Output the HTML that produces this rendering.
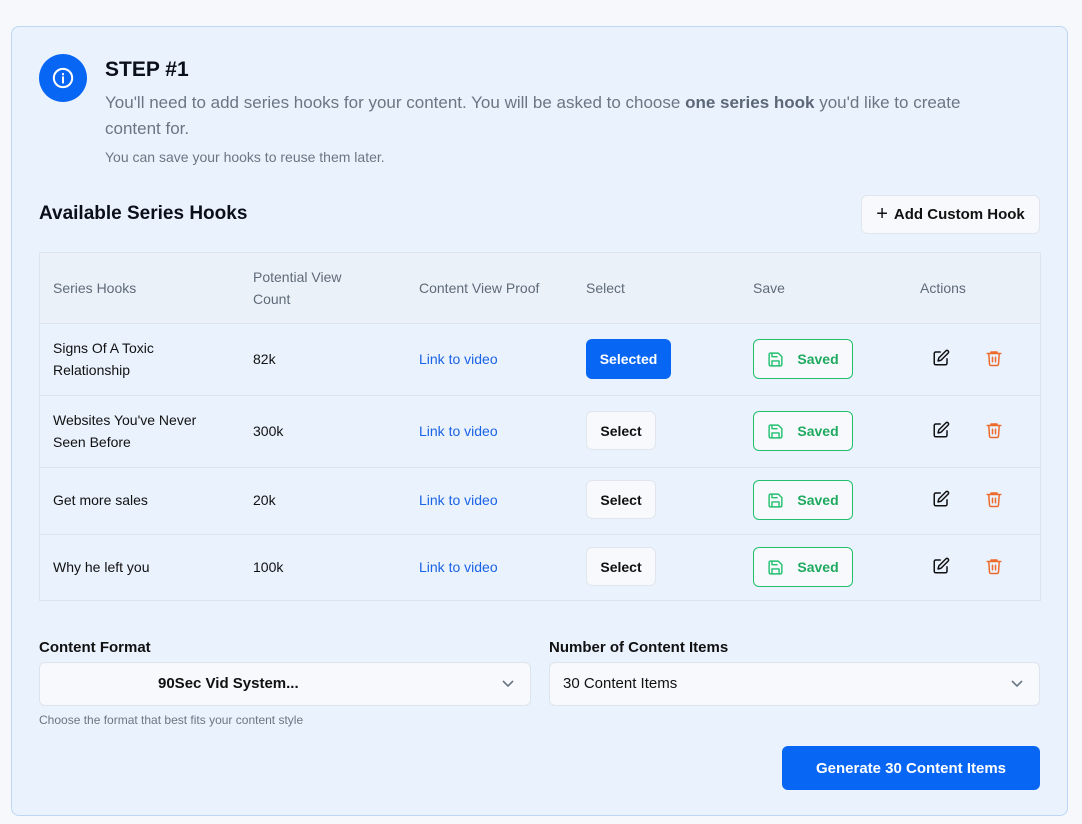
<!DOCTYPE html>
<html><head><meta charset="utf-8"><style>
*{box-sizing:border-box;margin:0;padding:0}
body{width:1082px;height:824px;background:#f6f8fb;font-family:"Liberation Sans",sans-serif;position:relative;overflow:hidden;color:#111}
.card{position:absolute;left:11px;top:26px;width:1057px;height:790px;background:#eaf2fd;border:1px solid #bcd6f3;border-radius:8px}
.a{position:absolute}
.th{position:absolute;font-size:14px;color:#5f6b7a;line-height:22px}
.td{position:absolute;font-size:14px;color:#111;line-height:22px}
.lk{color:#1a63e6}
.btn{position:absolute;border-radius:6px;font-size:14px;font-weight:bold;display:flex;align-items:center;justify-content:center}
.sel{background:#f7f9fc;border:1px solid #e1e6ee;color:#111;width:70px;height:39px}
.saved{width:100px;height:40px;border:1px solid #22c06e;background:#f7f9fc;color:#1faa5f;gap:13px}
.row{position:absolute;left:40px;width:1000px;border-top:1px solid #dde4ee}
</style></head><body>
<div class="card"></div>
<div class="a" style="left:39px;top:54px;width:48px;height:48px;border-radius:50%;background:#0866f5;display:flex;align-items:center;justify-content:center">
<svg width="22" height="22" viewBox="0 0 24 24" fill="none" stroke="#fff" stroke-width="2.2" stroke-linecap="round"><circle cx="12" cy="12" r="10"/><path d="M12 11v6M12 7.5v.5"/></svg></div>
<div class="a" style="left:105px;top:58px;font-size:21px;font-weight:bold;color:#0b0f1a">STEP #1</div>
<div class="a" style="left:105px;top:90px;width:900px;font-size:17px;line-height:26px;color:#6b7684">You'll need to add series hooks for your content. You will be asked to choose <b style="color:#5c6878">one series hook</b> you'd like to create<br>content for.</div>
<div class="a" style="left:105px;top:149px;font-size:14px;color:#6b7684">You can save your hooks to reuse them later.</div>
<div class="a" style="left:39px;top:203px;font-size:19px;font-weight:bold;color:#0b0f1a">Available Series Hooks</div>
<div class="btn" style="left:861px;top:195px;width:179px;height:39px;background:#f7f9fc;border:1px solid #e1e6ee;color:#111;font-size:15px"><span style="font-size:20px;font-weight:normal;margin-right:6px">+</span>Add Custom Hook</div>
<div class="a" style="left:39px;top:252px;width:1002px;height:349px;border:1px solid #dde4ee;background:#eaf2fd"></div>
<div class="a" style="left:40px;top:253px;width:1000px;height:70px;background:#ebf1f8"></div>
<div class="th" style="left:53px;top:277px">Series Hooks</div>
<div class="th" style="left:253px;top:266px">Potential View<br>Count</div>
<div class="th" style="left:419px;top:277px">Content View Proof</div>
<div class="th" style="left:586px;top:277px">Select</div>
<div class="th" style="left:753px;top:277px">Save</div>
<div class="th" style="left:920px;top:277px">Actions</div>
<div class="row" style="top:323px"></div><div class="row" style="top:395px"></div><div class="row" style="top:467px"></div><div class="row" style="top:534px"></div>

<div class="td" style="left:53px;top:337px">Signs Of A Toxic<br>Relationship</div>
<div class="td" style="left:253px;top:348px">82k</div>
<div class="td lk" style="left:419px;top:348px">Link to video</div>
<div class="btn" style="left:586px;top:339px;width:85px;height:40px;background:#0866f5;color:#fff">Selected</div>

<div class="td" style="left:53px;top:409px">Websites You've Never<br>Seen Before</div>
<div class="td" style="left:253px;top:420px">300k</div>
<div class="td lk" style="left:419px;top:420px">Link to video</div>
<div class="btn sel" style="left:586px;top:411px">Select</div>

<div class="td" style="left:53px;top:489px">Get more sales</div>
<div class="td" style="left:253px;top:489px">20k</div>
<div class="td lk" style="left:419px;top:489px">Link to video</div>
<div class="btn sel" style="left:586px;top:480px">Select</div>

<div class="td" style="left:53px;top:556px">Why he left you</div>
<div class="td" style="left:253px;top:556px">100k</div>
<div class="td lk" style="left:419px;top:556px">Link to video</div>
<div class="btn sel" style="left:586px;top:547px">Select</div>

<div class="btn saved" style="left:753px;top:339px"><svg width="17" height="17" viewBox="0 0 24 24" fill="none" stroke="#22c06e" stroke-width="2" stroke-linejoin="round"><path d="M5 3h11l5 5v11a2 2 0 0 1-2 2H5a2 2 0 0 1-2-2V5a2 2 0 0 1 2-2z"/><path d="M7 3v5h8M7 21v-7h10v7"/></svg>Saved</div>
<div class="btn saved" style="left:753px;top:411px"><svg width="17" height="17" viewBox="0 0 24 24" fill="none" stroke="#22c06e" stroke-width="2" stroke-linejoin="round"><path d="M5 3h11l5 5v11a2 2 0 0 1-2 2H5a2 2 0 0 1-2-2V5a2 2 0 0 1 2-2z"/><path d="M7 3v5h8M7 21v-7h10v7"/></svg>Saved</div>
<div class="btn saved" style="left:753px;top:480px"><svg width="17" height="17" viewBox="0 0 24 24" fill="none" stroke="#22c06e" stroke-width="2" stroke-linejoin="round"><path d="M5 3h11l5 5v11a2 2 0 0 1-2 2H5a2 2 0 0 1-2-2V5a2 2 0 0 1 2-2z"/><path d="M7 3v5h8M7 21v-7h10v7"/></svg>Saved</div>
<div class="btn saved" style="left:753px;top:547px"><svg width="17" height="17" viewBox="0 0 24 24" fill="none" stroke="#22c06e" stroke-width="2" stroke-linejoin="round"><path d="M5 3h11l5 5v11a2 2 0 0 1-2 2H5a2 2 0 0 1-2-2V5a2 2 0 0 1 2-2z"/><path d="M7 3v5h8M7 21v-7h10v7"/></svg>Saved</div>

<svg class="a" style="left:932px;top:349px" width="18" height="18" viewBox="0 0 24 24" fill="none" stroke="#111" stroke-width="2" stroke-linecap="round" stroke-linejoin="round"><path d="M11 4H5a2 2 0 0 0-2 2v13a2 2 0 0 0 2 2h13a2 2 0 0 0 2-2v-6"/><path d="M18.5 2.5a2.1 2.1 0 0 1 3 3L12 15l-4 1 1-4z"/></svg>
<svg class="a" style="left:985px;top:349px" width="18" height="18" viewBox="0 0 24 24" fill="none" stroke="#ec6a2c" stroke-width="2" stroke-linecap="round" stroke-linejoin="round"><path d="M3 6h18M8 6V4h8v2M19 6l-1 14a2 2 0 0 1-2 2H8a2 2 0 0 1-2-2L5 6M10 11v6M14 11v6"/></svg>
<svg class="a" style="left:932px;top:421px" width="18" height="18" viewBox="0 0 24 24" fill="none" stroke="#111" stroke-width="2" stroke-linecap="round" stroke-linejoin="round"><path d="M11 4H5a2 2 0 0 0-2 2v13a2 2 0 0 0 2 2h13a2 2 0 0 0 2-2v-6"/><path d="M18.5 2.5a2.1 2.1 0 0 1 3 3L12 15l-4 1 1-4z"/></svg>
<svg class="a" style="left:985px;top:421px" width="18" height="18" viewBox="0 0 24 24" fill="none" stroke="#ec6a2c" stroke-width="2" stroke-linecap="round" stroke-linejoin="round"><path d="M3 6h18M8 6V4h8v2M19 6l-1 14a2 2 0 0 1-2 2H8a2 2 0 0 1-2-2L5 6M10 11v6M14 11v6"/></svg>
<svg class="a" style="left:932px;top:490px" width="18" height="18" viewBox="0 0 24 24" fill="none" stroke="#111" stroke-width="2" stroke-linecap="round" stroke-linejoin="round"><path d="M11 4H5a2 2 0 0 0-2 2v13a2 2 0 0 0 2 2h13a2 2 0 0 0 2-2v-6"/><path d="M18.5 2.5a2.1 2.1 0 0 1 3 3L12 15l-4 1 1-4z"/></svg>
<svg class="a" style="left:985px;top:490px" width="18" height="18" viewBox="0 0 24 24" fill="none" stroke="#ec6a2c" stroke-width="2" stroke-linecap="round" stroke-linejoin="round"><path d="M3 6h18M8 6V4h8v2M19 6l-1 14a2 2 0 0 1-2 2H8a2 2 0 0 1-2-2L5 6M10 11v6M14 11v6"/></svg>
<svg class="a" style="left:932px;top:557px" width="18" height="18" viewBox="0 0 24 24" fill="none" stroke="#111" stroke-width="2" stroke-linecap="round" stroke-linejoin="round"><path d="M11 4H5a2 2 0 0 0-2 2v13a2 2 0 0 0 2 2h13a2 2 0 0 0 2-2v-6"/><path d="M18.5 2.5a2.1 2.1 0 0 1 3 3L12 15l-4 1 1-4z"/></svg>
<svg class="a" style="left:985px;top:557px" width="18" height="18" viewBox="0 0 24 24" fill="none" stroke="#ec6a2c" stroke-width="2" stroke-linecap="round" stroke-linejoin="round"><path d="M3 6h18M8 6V4h8v2M19 6l-1 14a2 2 0 0 1-2 2H8a2 2 0 0 1-2-2L5 6M10 11v6M14 11v6"/></svg>

<div class="a" style="left:39px;top:639px;font-size:15px;font-weight:bold;color:#111">Content Format</div>
<div class="a" style="left:549px;top:639px;font-size:15px;font-weight:bold;color:#111">Number of Content Items</div>
<div class="a" style="left:39px;top:662px;width:492px;height:44px;background:#f7f9fc;border:1px solid #dde4ee;border-radius:6px;font-size:15px;font-weight:bold;line-height:42px;padding-left:118px">90Sec Vid System...</div>
<div class="a" style="left:549px;top:662px;width:491px;height:44px;background:#f7f9fc;border:1px solid #dde4ee;border-radius:6px;font-size:15px;line-height:42px;padding-left:13px">30 Content Items</div>
<svg class="a" style="left:501px;top:679px" width="14" height="10" viewBox="0 0 14 10" fill="none" stroke="#6b7684" stroke-width="1.6"><path d="M2 2l5 5 5-5"/></svg>
<svg class="a" style="left:1010px;top:679px" width="14" height="10" viewBox="0 0 14 10" fill="none" stroke="#6b7684" stroke-width="1.6"><path d="M2 2l5 5 5-5"/></svg>
<div class="a" style="left:39px;top:713px;font-size:12px;color:#6b7684">Choose the format that best fits your content style</div>
<div class="btn" style="left:782px;top:746px;width:258px;height:44px;background:#0866f5;color:#fff;font-size:15px">Generate 30 Content Items</div>
</body></html>
